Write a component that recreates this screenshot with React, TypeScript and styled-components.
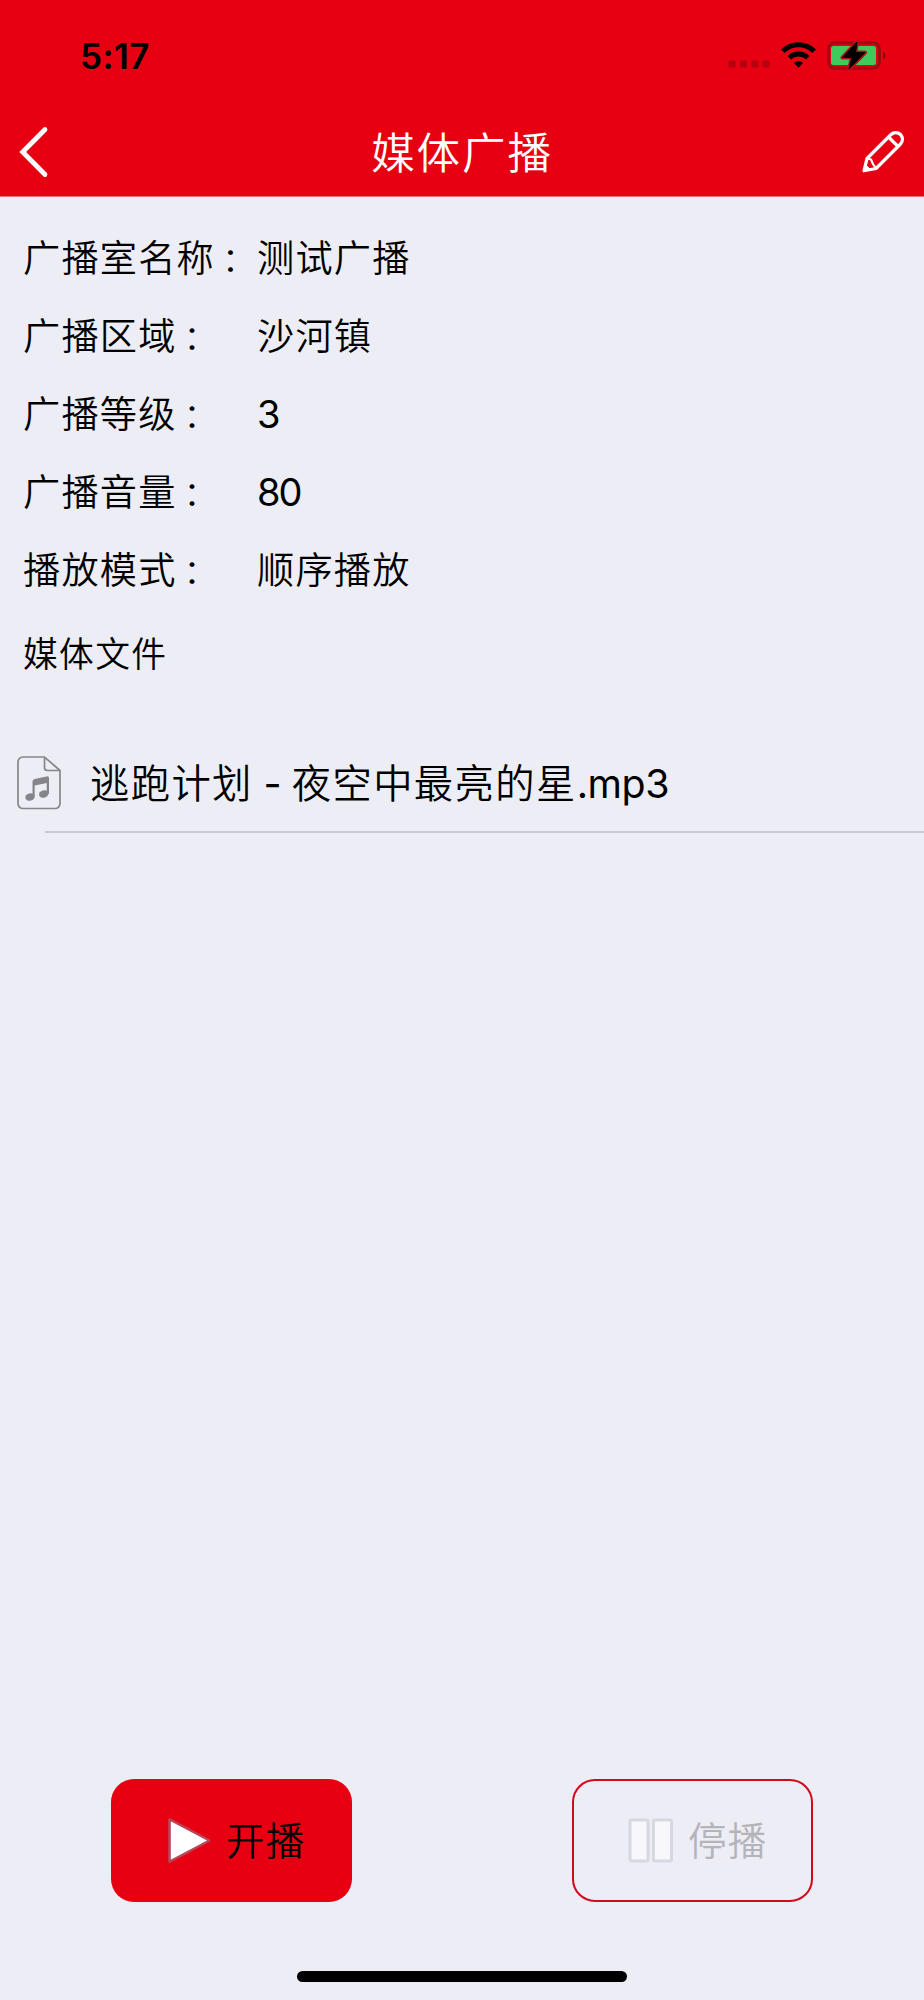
import React from 'react';
import styled, { createGlobalStyle } from 'styled-components';

const RED = '#e60012';
const SURFACE = '#ededf6';

const GlobalStyle = createGlobalStyle`
  * { box-sizing: border-box; }
  body {
    margin: 0;
    background: ${SURFACE};
    font-family: 'Noto Sans CJK SC', sans-serif;
    font-weight: 350;
    color: #000;
  }
`;

const Screen = styled.div`
  display: flex;
  flex-direction: column;
  width: 924px;
  height: 2000px;
  background: ${SURFACE};
  overflow: hidden;
`;

const Header = styled.header`
  height: 197px;
  flex: none;
  background: ${RED};
  border-bottom: 1px solid #e8707e;
`;

const StatusBar = styled.div`
  height: 110px;
  display: flex;
  justify-content: space-between;
  padding: 0 38px 0 80px;
`;

const Clock = styled.time`
  font: 600 35px/38px Inter, sans-serif;
  letter-spacing: 0.4px;
  margin-top: 37px;
`;

const StatusIcons = styled.div`
  display: flex;
  height: 32px;
  margin-top: 40px;
`;

const NavBar = styled.nav`
  height: 84px;
  display: grid;
  grid-template-columns: 100px 1fr 100px;
  align-items: center;
`;

const NavButton = styled.button<{ $end?: boolean }>`
  display: flex;
  justify-content: ${(p) => (p.$end ? 'flex-end' : 'flex-start')};
  padding: ${(p) => (p.$end ? '0 19px 0 0' : '0 0 0 18px')};
  border: 0;
  background: none;
`;

const Title = styled.h1`
  margin: 0 0 3px;
  color: #fff;
  font-size: 43.5px;
  line-height: 60px;
  font-weight: 350;
  letter-spacing: 1.9px;
  text-align: center;
`;

const Details = styled.dl`
  margin: 0;
  padding: 20px 23px 0;
`;

const DetailRow = styled.div`
  display: flex;
  height: 78px;
  align-items: center;
  font-size: 37.2px;
  line-height: 56px;
  letter-spacing: 1.2px;
  white-space: nowrap;
`;

const Label = styled.dt`
  flex: none;
  width: 234px;
`;

const Colon = styled.span`
  margin-left: 7px;
  font-size: 34px;
  line-height: 1;
`;

const Value = styled.dd<{ $numeric?: boolean }>`
  margin: 0;
  ${(p) =>
    p.$numeric &&
    `font-family: Inter, sans-serif;
     font-size: 38px;
     font-weight: 400;
     padding-top: 3px;
     letter-spacing: -1.9px;`}
`;

const SectionTitle = styled.h2`
  margin: 19px 0 0 23px;
  font-size: 34.8px;
  line-height: 52px;
  font-weight: 350;
  letter-spacing: 1.3px;
`;

const FileRow = styled.div`
  display: flex;
  align-items: center;
  height: 100px;
  margin-top: 53px;
  padding: 3px 0 0 17px;
`;

const FileName = styled.span`
  margin: 0 0 1px 29px;
  font-size: 39.3px;
  line-height: 60px;
  letter-spacing: 1.4px;
  white-space: pre;
`;

const Latin = styled.span`
  font-family: Inter, sans-serif;
  font-weight: 400;
  letter-spacing: -0.4px;
`;

const Divider = styled.hr`
  width: 879px;
  height: 2px;
  margin: 0 0 0 45px;
  border: 0;
  background: #c9c9d1;
`;

const Actions = styled.div`
  display: flex;
  justify-content: space-between;
  margin-top: auto;
  padding: 0 111px;
`;

const ActionButton = styled.button<{ $outlined?: boolean }>`
  display: flex;
  align-items: center;
  width: 241px;
  height: 123px;
  padding: 0 0 0 ${(p) => (p.$outlined ? 54 : 56)}px;
  border: ${(p) => (p.$outlined ? `2px solid #d3091c` : '0')};
  border-radius: 23px;
  background: ${(p) => (p.$outlined ? 'transparent' : RED)};
  color: ${(p) => (p.$outlined ? '#b4b4b8' : '#000')};
  font-family: inherit;
  font-weight: 350;
  font-size: 38.5px;
  line-height: 56px;
  letter-spacing: 1.3px;

  svg { flex: none; margin-right: ${(p) => (p.$outlined ? 14 : 13)}px; }
`;

const ActionLabel = styled.span`
  padding-bottom: 6px;
`;

const HomeIndicator = styled.div`
  width: 330px;
  height: 11px;
  margin: 69px 0 18px 297px;
  border-radius: 6px;
  background: #000;
`;

const StatusGlyphs = () => (
  <svg width="160" height="32" viewBox="726 40 160 32">
    <g fill="#b5000e">
      <rect x="728.5" y="60.5" width="7" height="7" rx="1.5" />
      <rect x="740" y="60.5" width="7" height="7" rx="1.5" />
      <rect x="751.5" y="60.5" width="7" height="7" rx="1.5" />
      <rect x="762.5" y="60.5" width="7" height="7" rx="1.5" />
    </g>
    <g fill="none" stroke="#000" strokeWidth="5">
      <path d="M782.8 51.2a22.4 22.4 0 0 1 31.4 0" />
      <path d="M789.3 57.7a13.2 13.2 0 0 1 18.4 0" />
    </g>
    <path d="M794 62.8a6.4 6.4 0 0 1 9 0l-4.5 5z" fill="#000" />
    <rect x="828.5" y="42.7" width="51" height="25.6" rx="6.5" fill="none" stroke="#9d0c12" strokeWidth="3" />
    <path d="M883 51.5q2.6 1 2.6 4t-2.6 4z" fill="#8d000b" />
    <rect x="831" y="46" width="45" height="19" rx="2.5" fill="#3fca5c" />
    <path d="M857 42 842.500 57.500h9.500L849 69 865 52.500h-9.500z" fill="#000" stroke="#b3121b" strokeWidth="4" strokeLinejoin="round" />
    <path d="M857 42 842.500 57.500h9.500L849 69 865 52.500h-9.500z" fill="#000" stroke="#000" strokeWidth="1" strokeLinejoin="round" />
  </svg>
);

const BackIcon = () => (
  <svg width="32" height="54" viewBox="18 125 32 54" fill="none" stroke="#fff" strokeWidth="4.800" strokeLinecap="round" strokeLinejoin="miter">
    <path d="M45 129.500 22.700 152 45 174.500" />
  </svg>
);

const PencilIcon = () => (
  <svg width="44" height="44" viewBox="862 130 44 44" fill="none" stroke="#fff" strokeWidth="3.200" strokeLinejoin="round">
    <path d="m865 170.800 3-12.300 24-24a6.600 6.600 0 0 1 9.500 9.500l-24.500 24.500z" />
    <path d="m889.500 137 9.500 9.500" />
    <path d="m868.500 158.500 3.500 1 2 4.500 3 4.500" strokeWidth="2.200" />
    <path d="m865 170.800 1.200-6.500 5.500 5.500z" fill="#fff" strokeWidth="1" />
  </svg>
);

const MusicFileIcon = () => (
  <svg width="44" height="54" viewBox="0 0 44 54" fill="none" stroke="#85858a" strokeWidth="1.700">
    <path d="M6 1h21.500L43 14.500V47.500a5 5 0 0 1-5 5H6a5 5 0 0 1-5-5V6a5 5 0 0 1 5-5z" />
    <path d="M27.500 1v10.500q0 3 3 3H43" />
    <g fill="#85858a" stroke="none">
      <ellipse cx="13" cy="41" rx="4.700" ry="3.700" transform="rotate(-15 13 41)" />
      <ellipse cx="26.700" cy="38" rx="4.700" ry="3.700" transform="rotate(-15 26.700 38)" />
      <path d="M15.500 25.500q0-2 2-2.600l12-2.500q2.500-.6 2.500 1.600V38h-2.300V27l-12 2.600V41h-2.200z" />
    </g>
  </svg>
);

const PlayIcon = () => (
  <svg width="46" height="46" viewBox="0 0 46 46">
    <path d="M2.500 1.500 42 22.500 2.500 43.500z" fill="#fff" stroke="#b8475a" strokeWidth="2.600" strokeLinejoin="round" />
    <path d="M4 3.500 40 22.500 4 41.500z" fill="#fff" />
  </svg>
);

const PauseIcon = () => (
  <svg width="46" height="46" viewBox="0 0 46 46" fill="#f7f7fc" stroke="#d8d8e1" strokeWidth="3">
    <rect x="2" y="2" width="18" height="41" rx="1.500" />
    <rect x="25.500" y="2" width="18" height="41" rx="1.500" />
  </svg>
);

const details = [
  { label: '广播室名称', value: '测试广播' },
  { label: '广播区域', value: '沙河镇' },
  { label: '广播等级', value: '3', numeric: true },
  { label: '广播音量', value: '80', numeric: true },
  { label: '播放模式', value: '顺序播放' },
];

export default function App() {
  return (
    <Screen>
      <GlobalStyle />
      <Header>
        <StatusBar>
          <Clock>5:17</Clock>
          <StatusIcons><StatusGlyphs /></StatusIcons>
        </StatusBar>
        <NavBar>
          <NavButton aria-label="返回"><BackIcon /></NavButton>
          <Title>媒体广播</Title>
          <NavButton $end aria-label="编辑"><PencilIcon /></NavButton>
        </NavBar>
      </Header>
      <Details>
        {details.map((d) => (
          <DetailRow key={d.label}>
            <Label>{d.label}<Colon>：</Colon></Label>
            <Value $numeric={d.numeric}>{d.value}</Value>
          </DetailRow>
        ))}
      </Details>
      <SectionTitle>媒体文件</SectionTitle>
      <FileRow>
        <MusicFileIcon />
        <FileName>逃跑计划<Latin> - </Latin>夜空中最亮的星<Latin>.mp3</Latin></FileName>
      </FileRow>
      <Divider />
      <Actions>
        <ActionButton><PlayIcon /><ActionLabel>开播</ActionLabel></ActionButton>
        <ActionButton $outlined disabled><PauseIcon /><ActionLabel>停播</ActionLabel></ActionButton>
      </Actions>
      <HomeIndicator />
    </Screen>
  );
}
